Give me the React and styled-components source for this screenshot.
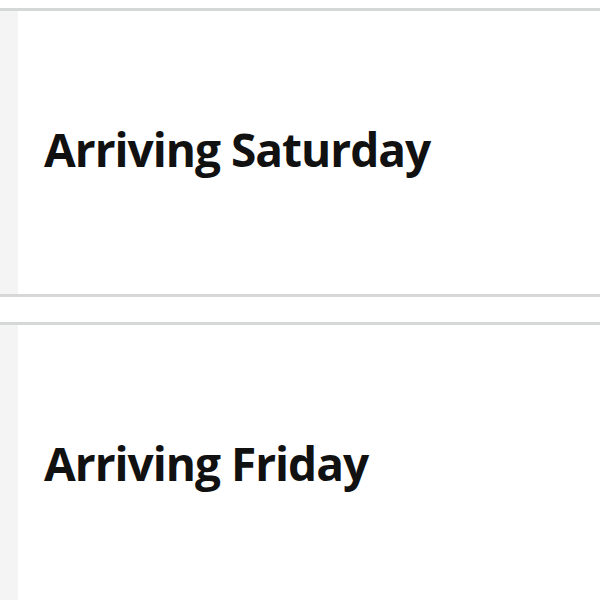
import React from "react";
import styled, { createGlobalStyle } from "styled-components";

const Global = createGlobalStyle`
  body {
    margin: 0;
    background: #ffffff;
    font-family: "Open Sans", "Noto Sans", sans-serif;
  }
`;

const Page = styled.div`
  padding-top: 8px;
  display: flex;
  flex-direction: column;
  gap: 25px;
  height: 600px;
  overflow: hidden;
`;

const Card = styled.section`
  flex-shrink: 0;
  display: flex;
  height: 283px;
  border-top: 3px solid #d6d8d8;
  border-bottom: 3px solid #d6d8d8;
  background: #ffffff;
`;

const Strip = styled.div`
  width: 18px;
  background: #f4f4f4;
`;

const Body = styled.div`
  flex: 1;
  display: flex;
  align-items: center;
  padding-left: 26px;
  padding-bottom: 7px;
`;

const Title = styled.h2`
  margin: 0;
  font-size: 46px;
  font-weight: 700;
  color: #111111;
  letter-spacing: -1px;
`;

const days = ["Saturday", "Friday"];

const App = () => {
  return (
    <>
      <Global />
      <Page>
        {days.map((d) => (
          <Card key={d}>
            <Strip />
            <Body>
              <Title>Arriving {d}</Title>
            </Body>
          </Card>
        ))}
      </Page>
    </>
  );
};

export default App;
